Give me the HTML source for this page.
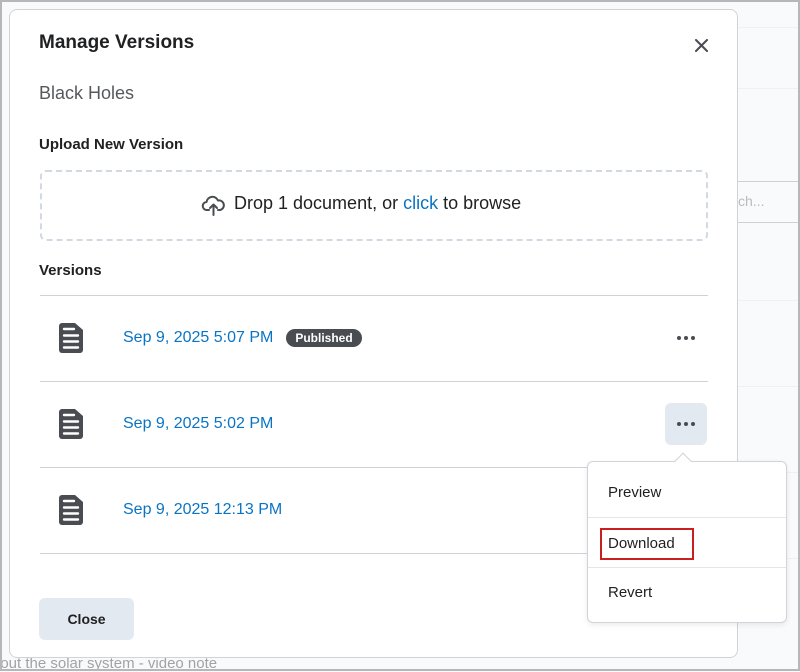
<!DOCTYPE html>
<html><head><meta charset="utf-8"><style>
*{box-sizing:border-box;margin:0;padding:0}
body{width:800px;height:671px;overflow:hidden;font-family:"Liberation Sans",sans-serif;background:#f9fafc;position:relative;color:#202122}
.frame{position:absolute;inset:0;border:2px solid #b5b8bb;pointer-events:none;z-index:10}
.modal{position:absolute;left:9px;top:9px;width:729px;height:649px;background:#fff;border:1px solid #d0d3d8;border-radius:8px}
.a{position:absolute}
.link{color:#0a74c4;font-size:16px}
.hr{position:absolute;left:30px;width:668px;height:1px;background:#cfd3d8}
.doc{position:absolute;left:49px;width:24px;height:30px}
.dots{position:absolute;width:42px;height:42px;border-radius:6px;display:flex;align-items:center;justify-content:center;gap:3px}
.dots i{width:4px;height:4px;border-radius:50%;background:#494c50;display:block}
</style></head><body>
<div class="a" style="left:737px;top:27px;width:63px;height:1px;background:#eef0f2"></div>
<div class="a" style="left:737px;top:88px;width:63px;height:1px;background:#eef0f2"></div>
<div class="a" style="left:737px;top:181px;width:63px;height:1px;background:#cdd0d4"></div>
<div class="a" style="left:737px;top:222px;width:63px;height:1px;background:#cdd0d4"></div>
<div class="a" style="left:738px;top:193px;color:#b8bbbf;font-size:14px">ch...</div>
<div class="a" style="left:737px;top:300px;width:63px;height:1px;background:#eef0f2"></div>
<div class="a" style="left:737px;top:386px;width:63px;height:1px;background:#eef0f2"></div>
<div class="a" style="left:737px;top:472px;width:63px;height:1px;background:#eef0f2"></div>
<div class="a" style="left:737px;top:558px;width:63px;height:1px;background:#eef0f2"></div>
<div class="a" style="top:655px;color:#a0a3a6;font-size:15px;left:-8px">bout the solar system - video note</div>
<div class="modal">
 <div class="a" style="left:29px;top:22px;font-size:19px;font-weight:bold;color:#202122">Manage Versions</div>
 <svg class="a" style="left:685px;top:29px" width="13" height="13" viewBox="0 0 13 13" stroke="#494c50" stroke-width="2" stroke-linecap="round"><path d="M1 1l11 11M12 1L1 12"/></svg>
 <div class="a" style="left:29px;top:73px;font-size:18px;color:#56595c">Black Holes</div>
 <div class="a" style="left:29px;top:126px;font-size:15px;font-weight:bold">Upload New Version</div>
 <div class="a" style="left:30px;top:160px;width:668px;height:71px;border:2px dashed #d3d9e3;border-radius:6px"></div>
 <div class="a" style="left:191px;top:183px;width:26px;height:26px">
  <svg width="26" height="26" viewBox="0 0 26 26" fill="none" stroke="#494c50" stroke-width="2" stroke-linecap="round" stroke-linejoin="round"><path d="M8 17H6a4 4 0 0 1-.5-8 6 6 0 0 1 11.5-1.5A4.5 4.5 0 0 1 19 17h-2"/><path d="M12.5 22V12M9 15l3.5-3.5L16 15"/></svg>
 </div>
 <div class="a" style="left:224px;top:183px;font-size:18px;color:#202122">Drop 1 document, or <span style="color:#0a74c4">click</span> to browse</div>
 <div class="a" style="left:29px;top:252px;font-size:15px;font-weight:bold">Versions</div>
 <div class="hr" style="top:285px"></div>
 <div class="hr" style="top:371px"></div>
 <div class="hr" style="top:457px"></div>
 <div class="hr" style="top:543px"></div>
 <svg class="doc" style="top:313px" viewBox="0 0 24 30"><path d="M3 0h13l8 7v20a3 3 0 0 1-3 3H3a3 3 0 0 1-3-3V3a3 3 0 0 1 3-3z" fill="#494c50"/><g stroke="#fff" stroke-width="2.4" stroke-linecap="round"><path d="M5 6h10M5 12.5h14M5 18.5h14M5 24.5h14"/></g></svg>
 <svg class="doc" style="top:399px" viewBox="0 0 24 30"><path d="M3 0h13l8 7v20a3 3 0 0 1-3 3H3a3 3 0 0 1-3-3V3a3 3 0 0 1 3-3z" fill="#494c50"/><g stroke="#fff" stroke-width="2.4" stroke-linecap="round"><path d="M5 6h10M5 12.5h14M5 18.5h14M5 24.5h14"/></g></svg>
 <svg class="doc" style="top:485px" viewBox="0 0 24 30"><path d="M3 0h13l8 7v20a3 3 0 0 1-3 3H3a3 3 0 0 1-3-3V3a3 3 0 0 1 3-3z" fill="#494c50"/><g stroke="#fff" stroke-width="2.4" stroke-linecap="round"><path d="M5 6h10M5 12.5h14M5 18.5h14M5 24.5h14"/></g></svg>
 <div class="a link" style="left:113px;top:319px">Sep 9, 2025 5:07 PM</div>
 <div class="a" style="left:276px;top:319px;width:76px;height:18px;border-radius:9px;background:#494c50;color:#fff;font-size:12px;font-weight:bold;text-align:center;line-height:18px">Published</div>
 <div class="a link" style="left:113px;top:405px">Sep 9, 2025 5:02 PM</div>
 <div class="a link" style="left:113px;top:491px">Sep 9, 2025 12:13 PM</div>
 <div class="dots" style="left:655px;top:307px"><i></i><i></i><i></i></div>
 <div class="dots" style="left:655px;top:393px;background:#e3e9f1"><i></i><i></i><i></i></div>
 <div class="a" style="left:29px;top:588px;width:95px;height:42px;border-radius:6px;background:#e3e9f1;font-size:14px;font-weight:bold;text-align:center;line-height:42px">Close</div>
</div>
<div class="a" style="left:587px;top:461px;width:200px;height:162px;background:#fff;border:1px solid #d0d3d8;border-radius:6px;box-shadow:0 2px 6px rgba(0,0,0,0.08)">
 <div class="a" style="left:89px;top:-7px;width:12px;height:12px;background:#fff;border-left:1px solid #d0d3d8;border-top:1px solid #d0d3d8;transform:rotate(45deg)"></div>
 <div class="a" style="left:20px;top:22px;font-size:15px;color:#202122">Preview</div>
 <div class="a" style="left:0;top:55px;width:198px;height:1px;background:#e3e6ea"></div>
 <div class="a" style="left:12px;top:66px;width:94px;height:32px;border:2px solid #c8201f"></div>
 <div class="a" style="left:20px;top:73px;font-size:15px;color:#202122">Download</div>
 <div class="a" style="left:0;top:105px;width:198px;height:1px;background:#e3e6ea"></div>
 <div class="a" style="left:20px;top:122px;font-size:15px;color:#202122">Revert</div>
</div>
<div class="frame"></div>
</body></html>
